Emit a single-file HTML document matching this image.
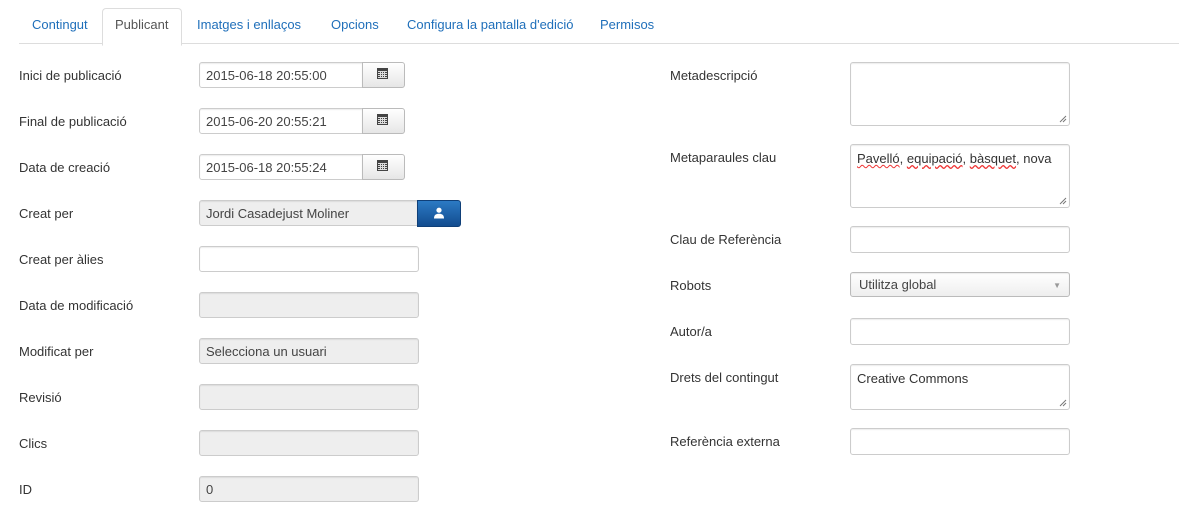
<!DOCTYPE html>
<html><head><meta charset="utf-8"><style>
body{margin:0;width:1179px;height:517px;background:#fff;font-family:"Liberation Sans",Arial,sans-serif;font-size:13px;color:#333;position:relative;overflow:hidden}
.a{position:absolute}
.tab{position:absolute;top:17px;color:#1f6fba;font-size:13px}
.lbl{position:absolute;font-size:13px;color:#333}
.in{position:absolute;box-sizing:border-box;border:1px solid #ccc;border-radius:3px;background:#fff;height:26px;box-shadow:inset 0 1px 1px rgba(0,0,0,.075);padding:6px 6px 4px;font-size:13px;color:#444;line-height:14px}
.dis{background:#eee}
.btn{position:absolute;box-sizing:border-box;height:26px;border:1px solid #bbb;border-radius:0 3px 3px 0;background:linear-gradient(#fff,#e6e6e6)}
.rs{position:absolute;right:2px;bottom:2px}
</style></head><body>
<div class="a" style="left:19px;top:43px;width:1160px;height:1px;background:#ddd"></div>
<div class="a" style="left:102px;top:8px;width:78px;height:36px;border:1px solid #ddd;border-bottom:1px solid #fff;border-radius:4px 4px 0 0;background:#fff"></div>
<div class="tab" style="left:32px">Contingut</div>
<div class="tab" style="left:115px;color:#555">Publicant</div>
<div class="tab" style="left:197px">Imatges i enllaços</div>
<div class="tab" style="left:331px">Opcions</div>
<div class="tab" style="left:407px">Configura la pantalla d'edició</div>
<div class="tab" style="left:600px">Permisos</div>

<svg width="0" height="0" style="position:absolute"><defs><g id="cal"><rect x="0" y="0" width="11" height="11" fill="#444"/><rect x="1" y="3" width="9" height="7" fill="#ddd"/><g fill="#444"><rect x="1" y="4" width="2" height="1"/><rect x="4" y="4" width="1" height="1"/><rect x="6" y="4" width="1" height="1"/><rect x="8" y="4" width="2" height="1"/><rect x="1" y="6" width="2" height="1"/><rect x="4" y="6" width="1" height="1"/><rect x="6" y="6" width="1" height="1"/><rect x="8" y="6" width="2" height="1"/><rect x="1" y="8" width="2" height="1"/><rect x="4" y="8" width="1" height="1"/><rect x="6" y="8" width="1" height="1"/><rect x="8" y="8" width="2" height="1"/></g></g></defs></svg>

<div class="lbl" style="left:19px;top:68px">Inici de publicació</div>
<div class="in" style="left:199px;top:62px;width:164px;border-radius:3px 0 0 3px">2015-06-18 20:55:00</div>
<div class="btn" style="left:362px;top:62px;width:43px"><svg class="a" style="left:14px;top:5px" width="11" height="11"><use href="#cal"/></svg></div>
<div class="lbl" style="left:19px;top:114px">Final de publicació</div>
<div class="in" style="left:199px;top:108px;width:164px;border-radius:3px 0 0 3px">2015-06-20 20:55:21</div>
<div class="btn" style="left:362px;top:108px;width:43px"><svg class="a" style="left:14px;top:5px" width="11" height="11"><use href="#cal"/></svg></div>
<div class="lbl" style="left:19px;top:160px">Data de creació</div>
<div class="in" style="left:199px;top:154px;width:164px;border-radius:3px 0 0 3px">2015-06-18 20:55:24</div>
<div class="btn" style="left:362px;top:154px;width:43px"><svg class="a" style="left:14px;top:5px" width="11" height="11"><use href="#cal"/></svg></div>
<div class="lbl" style="left:19px;top:206px">Creat per</div>
<div class="in dis" style="left:199px;top:200px;width:219px;border-radius:3px 0 0 3px">Jordi Casadejust Moliner</div>
<div class="a" style="left:417px;top:200px;width:44px;height:27px;border-radius:0 3px 3px 0;background:linear-gradient(#2c7ac4,#134c8f);border:1px solid #0f3f78;box-sizing:border-box">
<svg class="a" style="left:15px;top:6px" width="12" height="12" viewBox="0 0 12 12"><circle cx="6" cy="3.2" r="2.6" fill="#fff"/><path d="M1 11.5C1 8 3 6.8 6 6.8S11 8 11 11.5Z" fill="#fff"/></svg></div>
<div class="lbl" style="left:19px;top:252px">Creat per àlies</div>
<div class="in" style="left:199px;top:246px;width:220px"></div>
<div class="lbl" style="left:19px;top:298px">Data de modificació</div>
<div class="in dis" style="left:199px;top:292px;width:220px"></div>
<div class="lbl" style="left:19px;top:344px">Modificat per</div>
<div class="in dis" style="left:199px;top:338px;width:220px">Selecciona un usuari</div>
<div class="lbl" style="left:19px;top:390px">Revisió</div>
<div class="in dis" style="left:199px;top:384px;width:220px"></div>
<div class="lbl" style="left:19px;top:436px">Clics</div>
<div class="in dis" style="left:199px;top:430px;width:220px"></div>
<div class="lbl" style="left:19px;top:482px">ID</div>
<div class="in dis" style="left:199px;top:476px;width:220px">0</div>

<div class="lbl" style="left:670px;top:68px">Metadescripció</div>
<div class="in" style="left:850px;top:62px;width:220px;height:64px"><svg class="rs" width="8" height="8"><path d="M1 7L7 1M4 7L7 4" stroke="#777"/></svg></div>
<div class="lbl" style="left:670px;top:150px">Metaparaules clau</div>
<div class="in" style="left:850px;top:144px;width:220px;height:64px;color:#333;padding-top:7px"><span style="text-decoration:underline wavy #e33;text-decoration-thickness:1px">Pavelló</span>, <span style="text-decoration:underline wavy #e33">equipació</span>, <span style="text-decoration:underline wavy #e33">bàsquet</span>, nova<svg class="rs" width="8" height="8"><path d="M1 7L7 1M4 7L7 4" stroke="#777"/></svg></div>
<div class="lbl" style="left:670px;top:232px">Clau de Referència</div>
<div class="in" style="left:850px;top:226px;width:220px;height:27px"></div>
<div class="lbl" style="left:670px;top:278px">Robots</div>
<div class="in" style="left:850px;top:272px;width:220px;height:25px;background:linear-gradient(#fff,#eee);border-color:#bbb;color:#444;padding:5px 8px">Utilitza global<span class="a" style="right:8px;top:6px;font-size:8px;color:#999">▼</span></div>
<div class="lbl" style="left:670px;top:324px">Autor/a</div>
<div class="in" style="left:850px;top:318px;width:220px;height:27px"></div>
<div class="lbl" style="left:670px;top:370px">Drets del contingut</div>
<div class="in" style="left:850px;top:364px;width:220px;height:46px;color:#333;padding-top:7px">Creative Commons<svg class="rs" width="8" height="8"><path d="M1 7L7 1M4 7L7 4" stroke="#777"/></svg></div>
<div class="lbl" style="left:670px;top:434px">Referència externa</div>
<div class="in" style="left:850px;top:428px;width:220px;height:27px"></div>
</body></html>
